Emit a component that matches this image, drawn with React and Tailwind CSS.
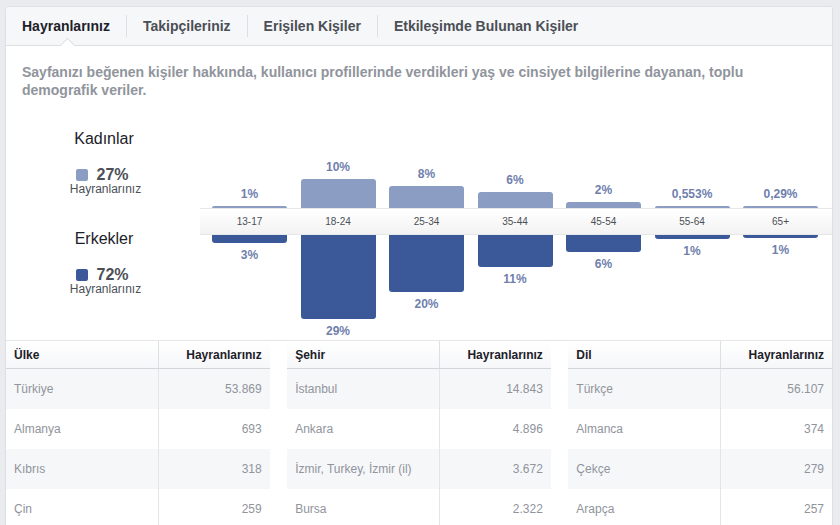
import React from "react";

const ages = [
  { a: "13-17", t: "1%", th: 2, b: "3%", bh: 8 },
  { a: "18-24", t: "10%", th: 29, b: "29%", bh: 84 },
  { a: "25-34", t: "8%", th: 22, b: "20%", bh: 57 },
  { a: "35-44", t: "6%", th: 16, b: "11%", bh: 32 },
  { a: "45-54", t: "2%", th: 6, b: "6%", bh: 17 },
  { a: "55-64", t: "0,553%", th: 2, b: "1%", bh: 4 },
  { a: "65+", t: "0,29%", th: 2, b: "1%", bh: 3 },
];

const tables = [
  {
    h: "Ülke",
    rows: [
      ["Türkiye", "53.869"],
      ["Almanya", "693"],
      ["Kıbrıs", "318"],
      ["Çin", "259"],
    ],
  },
  {
    h: "Şehir",
    rows: [
      ["İstanbul", "14.843"],
      ["Ankara", "4.896"],
      ["İzmir, Turkey, İzmir (il)", "3.672"],
      ["Bursa", "2.322"],
    ],
  },
  {
    h: "Dil",
    rows: [
      ["Türkçe", "56.107"],
      ["Almanca", "374"],
      ["Çekçe", "279"],
      ["Arapça", "257"],
    ],
  },
];

function Tab({ label, active }) {
  return (
    <div className="relative h-full flex items-center px-4">
      <span className={active ? "text-[#1d2129]" : "text-[#4b4f56]"}>{label}</span>
      {active && (
        <div className="absolute left-1/2 -bottom-[6px] -ml-[4px] w-[11px] h-[11px] rotate-45 bg-white border-l border-t border-[#dddfe2]" />
      )}
    </div>
  );
}

function Sep() {
  return <div className="w-px h-[22px] bg-[#dddfe2]" />;
}

function Legend({ title, color, pct }) {
  return (
    <div className="flex flex-col items-center">
      <div className="text-[16px] leading-[19px] text-[#1d2129]">{title}</div>
      <div className="mt-[19px] flex items-center gap-[8px] pr-[3px]">
        <div className={`w-[12px] h-[12px] rounded-[2px] ${color}`} />
        <div className="text-[16px] leading-[16px] font-bold text-[#4b4f56]">{pct}</div>
      </div>
      <div className="text-[12px] leading-[14px] text-[#4b4f56] mt-[-1px] pl-[3px]">Hayranlarınız</div>
    </div>
  );
}

export default function App() {
  return (
    <div
      className="w-[840px] h-[525px] overflow-hidden bg-[#e9ebee] pt-[6px] pl-[5px]"
      style={{ fontFamily: '"Liberation Sans", Arial, sans-serif' }}
    >
      <div className="w-[828px] h-[540px] bg-white border border-[#dddfe2] rounded-t-[3px]">
        {/* Tabs */}
        <div className="h-[39px] bg-[#f6f7f9] border-b border-[#dddfe2] flex items-center text-[14px] font-bold rounded-t-[3px]">
          <Tab label="Hayranlarınız" active />
          <Sep />
          <Tab label="Takipçileriniz" />
          <Sep />
          <Tab label="Erişilen Kişiler" />
          <Sep />
          <Tab label="Etkileşimde Bulunan Kişiler" />
        </div>

        {/* Description */}
        <div className="pt-[17px] px-4 text-[14px] leading-[18px] font-bold text-[#90949c]">
          Sayfanızı beğenen kişiler hakkında, kullanıcı profillerinde verdikleri yaş ve cinsiyet bilgilerine dayanan, toplu
          <br />
          demografik veriler.
        </div>

        {/* Chart */}
        <div className="mt-[9px] h-[232px] flex">
          <div className="ml-[58px] w-[80px] pt-[21px] flex flex-col">
            <Legend title="Kadınlar" color="bg-[#8b9dc3]" pct="27%" />
            <div className="mt-[33px]">
              <Legend title="Erkekler" color="bg-[#3b5998]" pct="72%" />
            </div>
          </div>
          <div className="ml-[56px] flex-1 flex flex-col">
            <div className="h-[100px] flex items-end pl-[12px] gap-[13.5px]">
              {ages.map((d) => (
                <div key={d.a} className="w-[75px] flex flex-col items-center">
                  <div className="text-[12px] leading-[14px] font-bold text-[#6f80ad] mb-[5px]">{d.t}</div>
                  <div
                    className="w-full bg-[#8b9dc3] rounded-t-[3px]"
                    style={{ height: d.th }}
                  />
                </div>
              ))}
            </div>
            <div className="h-[27px] border-y border-[#e6e7ea] bg-gradient-to-b from-white to-[#f3f3f3] flex items-center pl-[12px] gap-[13.5px]">
              {ages.map((d) => (
                <div key={d.a} className="w-[75px] text-center text-[10px] text-[#4b4f56]">
                  {d.a}
                </div>
              ))}
            </div>
            <div className="flex items-start pl-[12px] gap-[13.5px]">
              {ages.map((d) => (
                <div key={d.a} className="w-[75px] flex flex-col items-center">
                  <div
                    className="w-full bg-[#3b5998] rounded-b-[3px]"
                    style={{ height: d.bh }}
                  />
                  <div className="text-[12px] leading-[14px] font-bold text-[#6f80ad] mt-[5px]">{d.b}</div>
                </div>
              ))}
            </div>
          </div>
        </div>

        {/* Tables */}
        <div className="border-t border-[#e5e5e5] grid grid-cols-3 gap-x-[17.5px] text-[12px]">
          {tables.map((t) => (
            <div key={t.h} className="flex flex-col">
              <div className="h-[28px] flex border-b border-[#d3d6db] bg-gradient-to-b from-white to-[#f6f7f9] font-bold text-[#1d2129]">
                <div className="w-[153px] border-r border-[#dddfe2] flex items-center pl-[8px]">{t.h}</div>
                <div className="flex-1 flex items-center justify-end pr-[8px]">Hayranlarınız</div>
              </div>
              {t.rows.map((r, i) => (
                <div
                  key={r[0]}
                  className={`h-[40px] flex text-[#90949c] ${i % 2 === 0 ? "bg-[#f6f7f9]" : "bg-white"}`}
                >
                  <div className="w-[153px] border-r border-[#e5e5e5] flex items-center pl-[8px]">{r[0]}</div>
                  <div className="flex-1 flex items-center justify-end pr-[8px]">{r[1]}</div>
                </div>
              ))}
            </div>
          ))}
        </div>
      </div>
    </div>
  );
}
